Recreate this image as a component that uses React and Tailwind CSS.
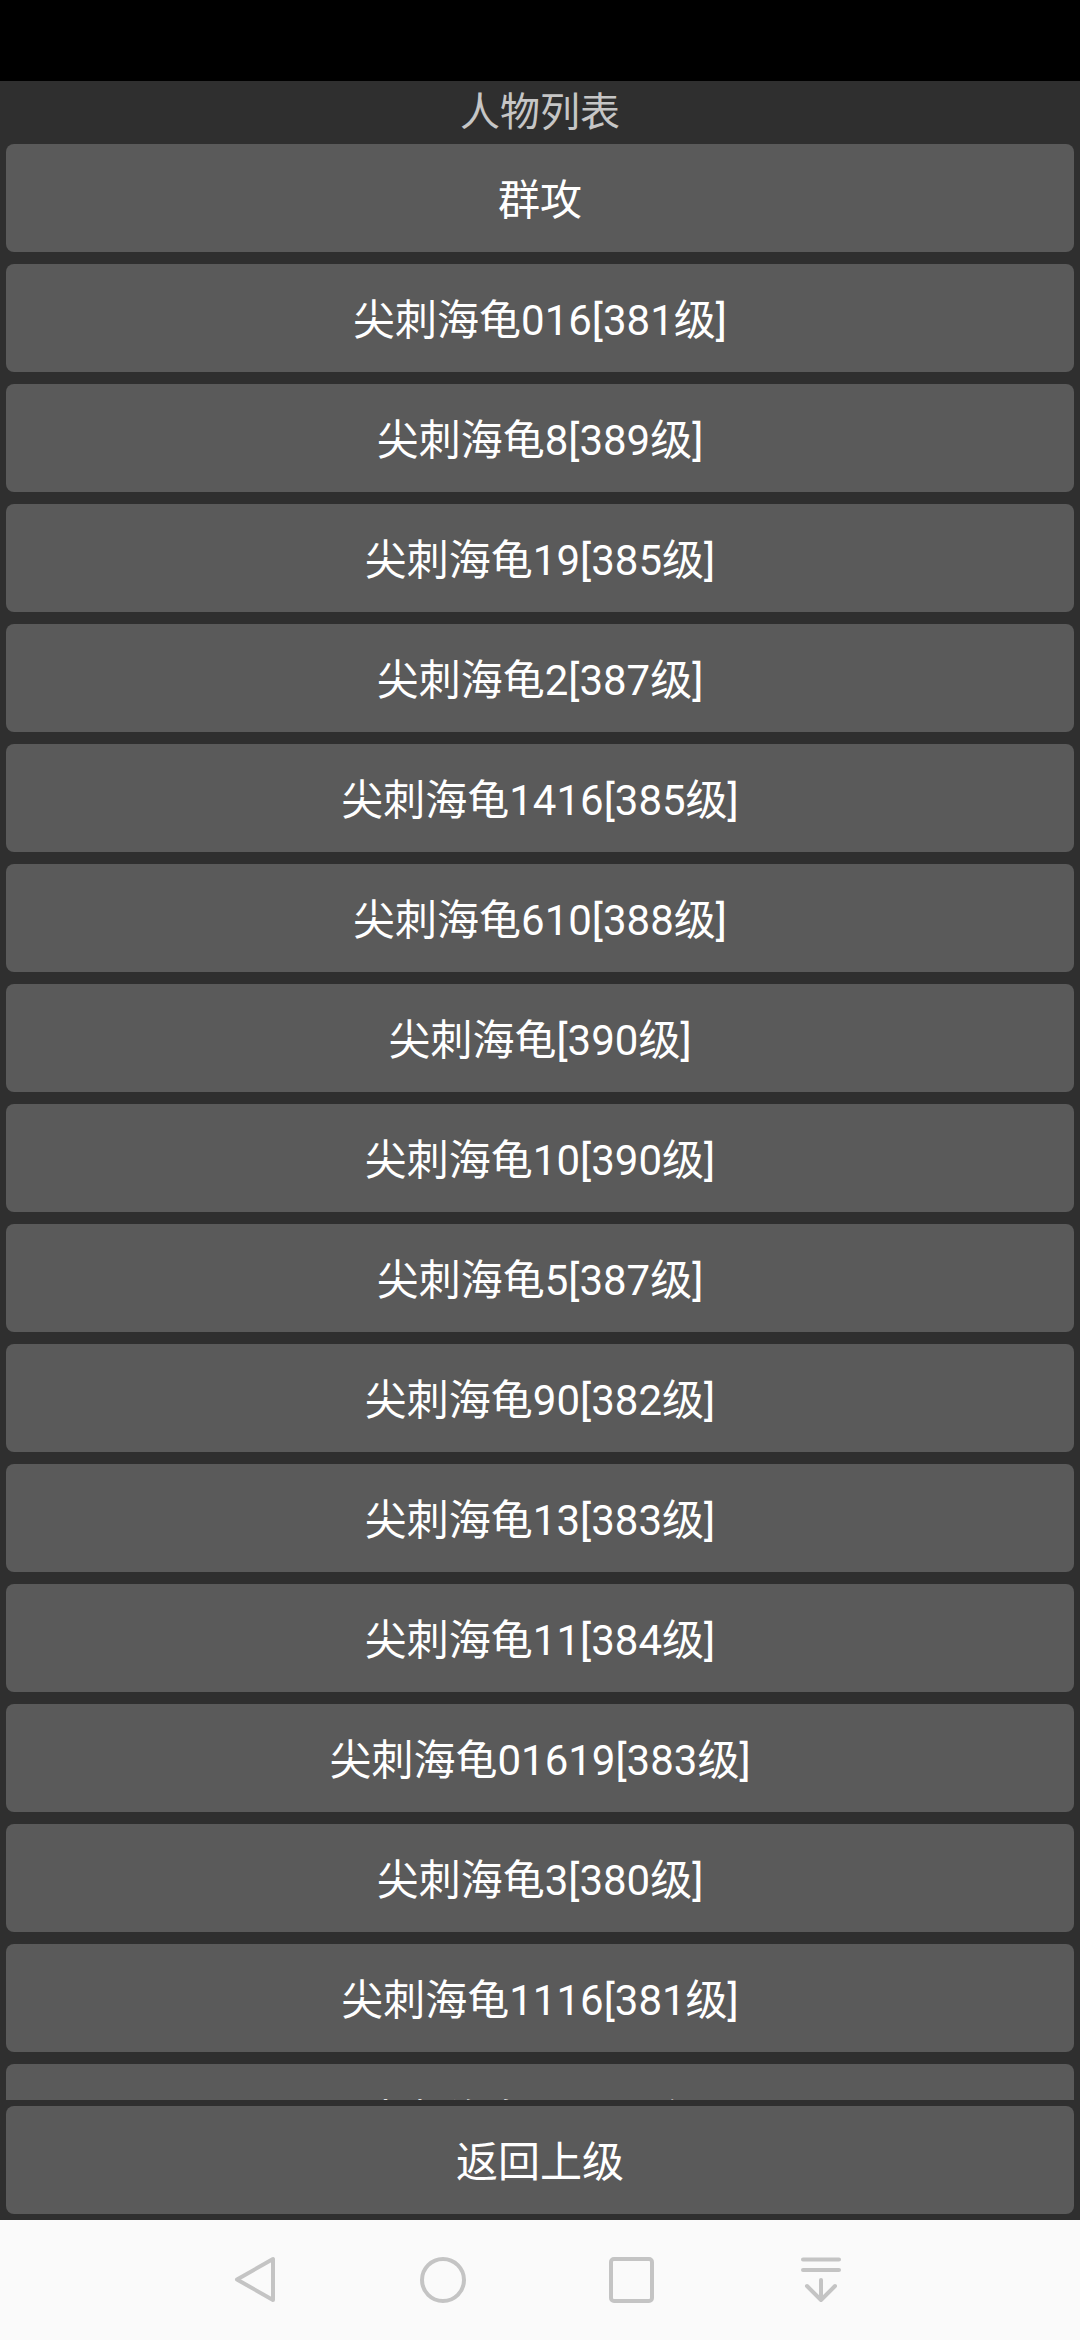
import React from "react";

const targets = [
  "群攻",
  "尖刺海龟016[381级]",
  "尖刺海龟8[389级]",
  "尖刺海龟19[385级]",
  "尖刺海龟2[387级]",
  "尖刺海龟1416[385级]",
  "尖刺海龟610[388级]",
  "尖刺海龟[390级]",
  "尖刺海龟10[390级]",
  "尖刺海龟5[387级]",
  "尖刺海龟90[382级]",
  "尖刺海龟13[383级]",
  "尖刺海龟11[384级]",
  "尖刺海龟01619[383级]",
  "尖刺海龟3[380级]",
  "尖刺海龟1116[381级]",
  "尖刺海龟12[386级]",
];

const font = { fontFamily: '"Roboto", "Noto Sans CJK SC", sans-serif' };

function ListButton({ label }) {
  return (
    <button className="h-[108px] w-full shrink-0 rounded-[8px] bg-[#5a5a5a] pt-[6px] text-[42px] leading-[50px] text-white flex items-center justify-center">
      {label}
    </button>
  );
}

function NavBar() {
  return (
    <div className="h-[120px] shrink-0 bg-[#fafafa] flex items-center pl-[231px] gap-[140px]">
      <svg width="48" height="48" viewBox="0 0 48 48" fill="none" stroke="#c4c4c4" strokeWidth="4" strokeLinejoin="round">
        <polygon points="6,23.5 42,3 42,44" />
      </svg>
      <svg width="48" height="48" viewBox="0 0 48 48" fill="none" stroke="#c4c4c4" strokeWidth="4">
        <circle cx="24" cy="24" r="21" />
      </svg>
      <svg width="48" height="48" viewBox="0 0 48 48" fill="none" stroke="#c4c4c4" strokeWidth="4">
        <rect x="4" y="3" width="41" height="42" rx="3" />
      </svg>
      <svg width="48" height="48" viewBox="0 0 48 48" fill="none" stroke="#c4c4c4" strokeWidth="4" strokeLinecap="round" strokeLinejoin="round">
        <path d="M8 3.5H44M8 14H44M26 24V44M12 30L26 44L40 30" />
      </svg>
    </div>
  );
}

export default function App() {
  return (
    <div className="w-[1080px] h-[2340px] flex flex-col bg-[#2f2f2f] overflow-hidden" style={font}>
      <div className="h-[81px] shrink-0 bg-black" />
      <div className="h-[63px] shrink-0 flex items-center justify-center text-[40px] text-[#c6c6c6]">
        人物列表
      </div>
      <div className="h-[1956px] shrink-0 overflow-hidden px-[6px] flex flex-col gap-[12px]">
        {targets.map((t, i) => (
          <ListButton key={i} label={t} />
        ))}
      </div>
      <div className="shrink-0 p-[6px]">
        <ListButton label="返回上级" />
      </div>
      <NavBar />
    </div>
  );
}
